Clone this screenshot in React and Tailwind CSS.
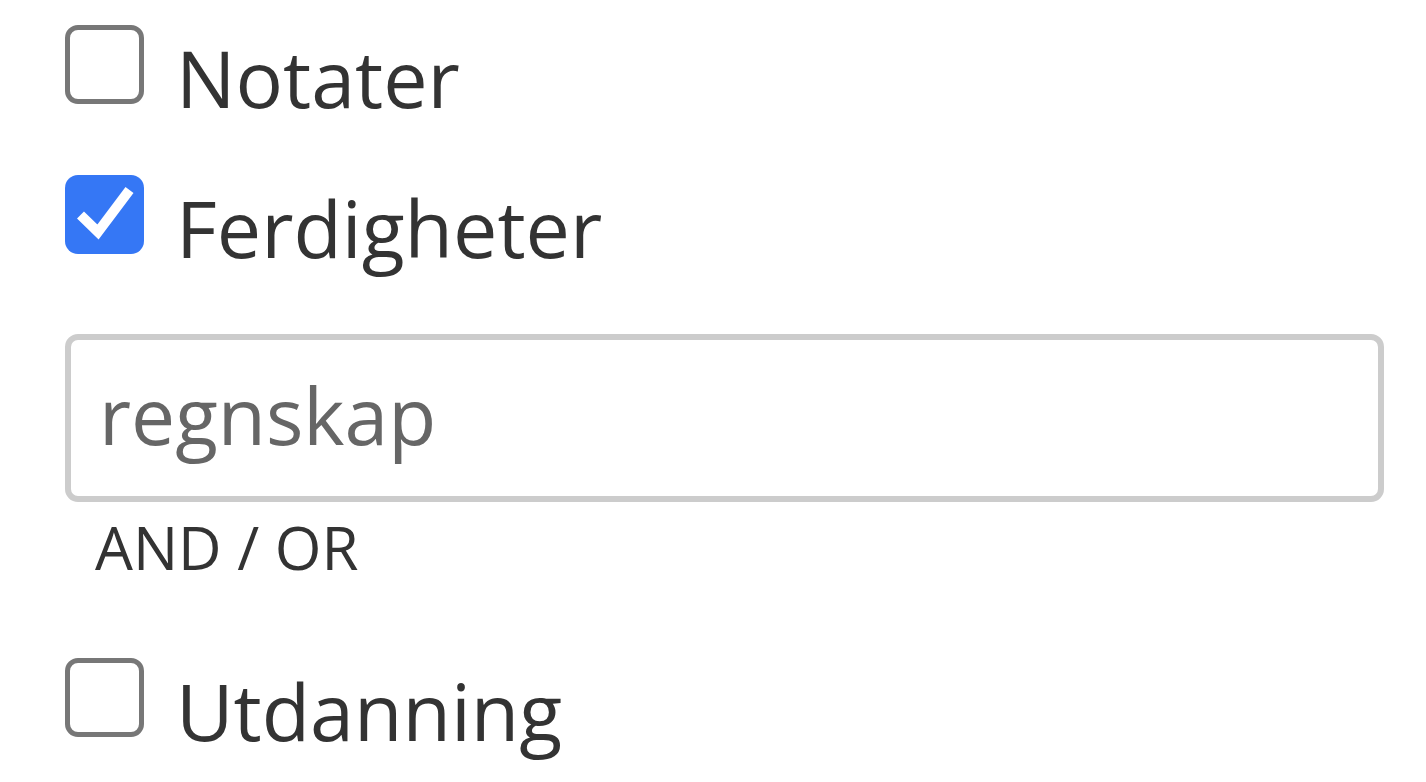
import { useState } from "react";

const Check = ({ checked, onChange }) => (
    <button
        onClick={onChange}
        className={`mt-[7px] shrink-0 w-[79px] h-[79px] rounded-[13px] flex items-center justify-center ${checked ? "bg-[#3577f5]" : "border-[5px] border-[#777] bg-white"}`}
    >
        {checked && (
            <svg width="79" height="79" viewBox="0 0 79 79">
                <polyline points="15.5,40 33,57 64.5,15" fill="none" stroke="#fff" strokeWidth="10" />
            </svg>
        )}
    </button>
);

const Row = ({ label, checked, onChange }) => (
    <div className="flex items-start gap-[32px]">
        <Check checked={checked} onChange={onChange} />
        <span className="text-[79px] leading-[120px] text-[#333]">{label}</span>
    </div>
);

export default function App() {
    const [checks, setChecks] = useState({ notater: false, ferdigheter: true, utdanning: false });
    const toggle = (key) => setChecks({ ...checks, [key]: !checks[key] });

    return (
        <div className="min-h-[782px] bg-white pl-[65px] pr-[42px] pt-[18px]" style={{ fontFamily: '"Open Sans", sans-serif' }}>
            <div className="flex flex-col gap-[30px]">
                <Row label="Notater" checked={checks.notater} onChange={() => toggle("notater")} />
                <Row label="Ferdigheter" checked={checks.ferdigheter} onChange={() => toggle("ferdigheter")} />
            </div>

            {/* search field */}
            <input
                type="text"
                placeholder="regnskap"
                className="mt-[46px] block w-full h-[168px] border-[6px] border-[#ccc] rounded-[13px] pl-[28px] pb-[8px] text-[78.5px] text-[#666] placeholder:text-[#666] outline-none"
            />
            <div className="pl-[30px] text-[60px] leading-[90px] text-[#333]">AND / OR</div>

            <div className="mt-[59px]">
                <Row label="Utdanning" checked={checks.utdanning} onChange={() => toggle("utdanning")} />
            </div>
        </div>
    );
}
